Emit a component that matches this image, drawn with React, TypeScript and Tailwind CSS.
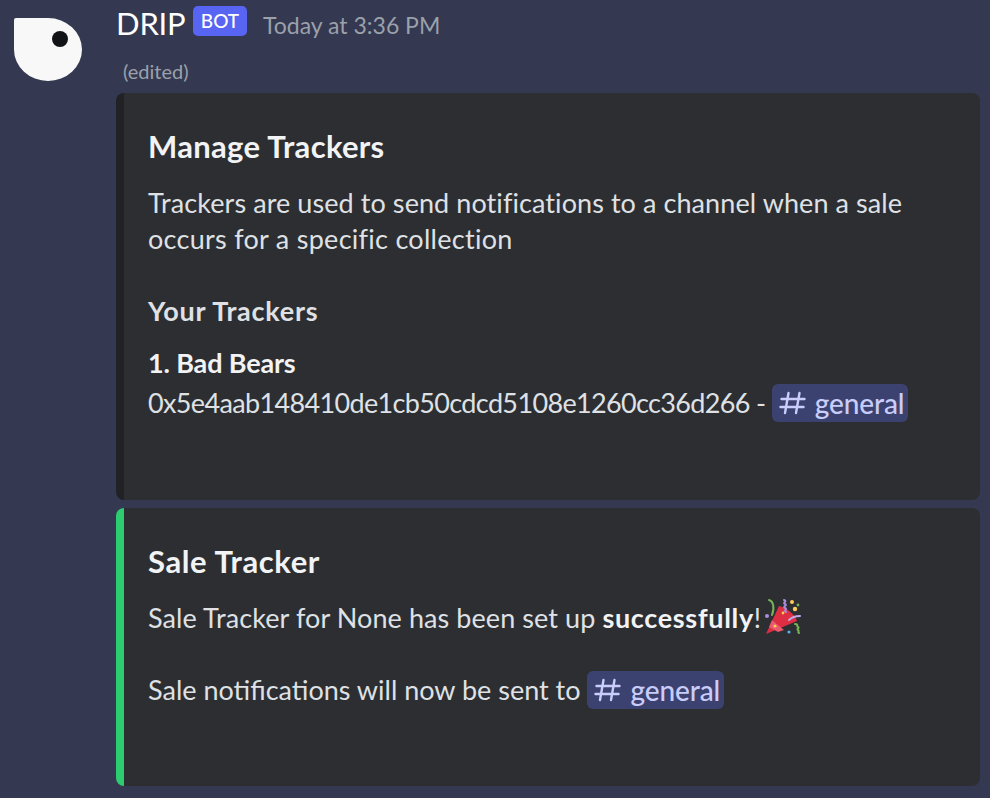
import React from "react";

function Hash() {
  return (
    <svg width="27" height="24" viewBox="0 0 27 24" className="shrink-0" fill="none" stroke="#c9cdfb" strokeWidth="2.4" strokeLinecap="round">
      <path d="M9.5 2 6 22M20.5 2 17 22M2.5 8h23M1.5 16h23" />
    </svg>
  );
}

function Mention() {
  return (
    <span className="inline-flex items-center h-[38px] rounded-[6px] bg-[#3c4270] pl-[7px] pr-[4px] text-[#c9cdfb] text-[28px] font-medium align-middle">
      <Hash />
      <span className="ml-[9px] tracking-[-0.1px]">general</span>
    </span>
  );
}

function Party() {
  return (
    <svg width="40" height="40" viewBox="0 0 40 40" className="inline-block align-middle" fill="none">
      <path d="M1 36 14 8C20 9 30 16 32 23Z" fill="#dd2e44" />
      <path d="M7 22 19 32 13 34 4 29Z" fill="#ea596e" />
      <path d="M4 2c4 1 6 7 3 15" stroke="#77b255" strokeWidth="2" strokeLinecap="round" />
      <path d="M19 2c4 1-2 3 1 4s-3 3 0 4-2 3 1 4" stroke="#aa8dd8" strokeWidth="2" strokeLinecap="round" />
      <path d="M24 22c3-3 7-4 11-4" stroke="#c4a8ec" strokeWidth="2" strokeLinecap="round" />
      <path d="M30 26c4 0 1 2 3 3s-2 2 0 3-1 2 1 3" stroke="#77b255" strokeWidth="2" strokeLinecap="round" />
      <circle cx="27" cy="4" r="2" fill="#fdcb58" />
      <circle cx="33" cy="7" r="1.4" fill="#77b255" />
      <circle cx="30" cy="11" r="2.2" fill="#fdcb58" />
      <circle cx="2" cy="18" r="2" fill="#aa8dd8" />
      <circle cx="24" cy="34" r="1.6" fill="#55acee" />
      <circle cx="10" cy="28" r="1.6" fill="#ffcc4d" />
      <circle cx="18" cy="15" r="1.4" fill="#ffcc4d" />
    </svg>
  );
}

export default function App() {
  return (
    <div className="w-[990px] h-[798px] overflow-hidden bg-[#343850] flex font-['Lato',sans-serif] text-[27px] leading-[36px] text-[#dfe1e5]">
      <div className="w-[116px] shrink-0 pl-[13px] pt-[17px]">
        <svg width="70" height="66" viewBox="0 0 70 66">
          <path d="M1 3Q1 1 3 1H35A34 31.5 0 1 1 1 32.5Z" fill="#f8f8f9" />
          <circle cx="47" cy="22" r="8" fill="#121316" />
        </svg>
      </div>
      <div className="w-[864px] shrink-0 flex flex-col">
        <div className="h-[46px] flex items-start">
          <span className="w-[70px] text-white text-[31px] leading-[46px] tracking-[-0.2px]">DRIP</span>
          <span className="mt-[6px] ml-[7px] h-[30px] w-[54px] flex items-center justify-center rounded-[5px] bg-[#5865f2] text-white text-[19px] leading-[30px] font-medium">BOT</span>
          <span className="ml-[16px] mt-[5px] text-[#9ba1ab] text-[23px] leading-[40px]">Today at 3:36 PM</span>
        </div>
        <div className="h-[47px] pl-[7px] pt-[2px] text-[#9ba1ab] text-[20px] leading-[46px]">(edited)</div>
        <div className="h-[407px] rounded-[8px] border-l-[8px] border-[#202225] bg-[#2d2e32] pl-[24px] pt-[35px]">
          <div className="text-[#f2f3f5] font-bold text-[31px] leading-[36px] tracking-[0.3px]">Manage Trackers</div>
          <div className="mt-[21px] text-[27px] leading-[36px]">
            <span className="tracking-[0.08px]">Trackers are used to send notifications to a channel when a sale</span><br />
            <span className="tracking-[0.28px]">occurs for a specific collection</span>
          </div>
          <div className="mt-[36px] font-bold text-[27px] leading-[36px] tracking-[0.75px] text-[#dfe1e5]">Your Trackers</div>
          <div className="mt-[16px] font-bold text-[#f2f3f5] leading-[36px] tracking-[-0.15px]">1. Bad Bears</div>
          <div className="mt-[2px] flex items-center h-[40px] whitespace-pre">
            <span className="tracking-[-0.65px]">0x5e4aab148410de1cb50cdcd5108e1260cc36d266 - </span><Mention />
          </div>
        </div>
        <div className="mt-[8px] h-[278px] rounded-[8px] border-l-[8px] border-[#2ecc71] bg-[#2d2e32] pl-[24px] pt-[35px]">
          <div className="text-[#f2f3f5] font-bold text-[31px] leading-[36px] tracking-[0.6px]">Sale Tracker</div>
          <div className="mt-[21px] flex items-center h-[36px] whitespace-pre">
            <span className="tracking-[0.08px]">Sale Tracker for None has been set up </span><b className="font-bold text-[#f2f3f5] tracking-[0.67px]">successfully</b>!<span className="w-[4px]" /><Party />
          </div>
          <div className="mt-[35px] flex items-center h-[38px] whitespace-pre">
            Sale notifications will now be sent to <Mention />
          </div>
        </div>
      </div>
    </div>
  );
}
